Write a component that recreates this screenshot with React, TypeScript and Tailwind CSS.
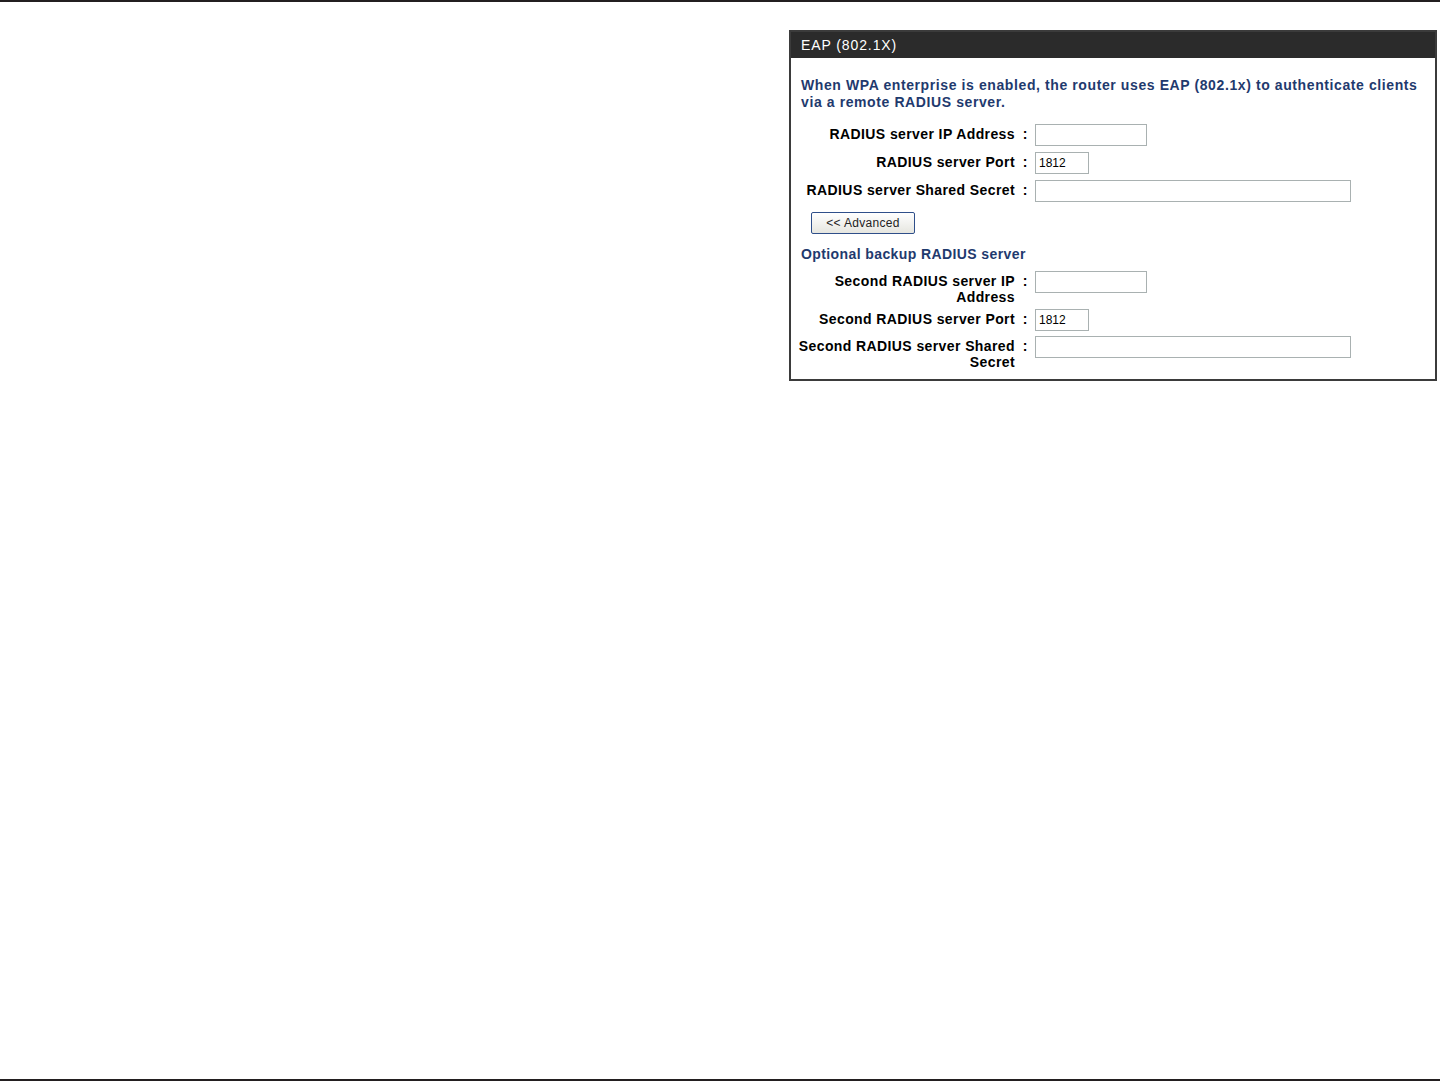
import React from 'react'

const font = { fontFamily: '"Liberation Sans", Arial, sans-serif' }

interface FieldRowProps {
  label: React.ReactNode
  inputWidth: string
  value?: string
  rowClass: string
}

// One label / colon / input line of the form
function FieldRow({ label, inputWidth, value, rowClass }: FieldRowProps): React.ReactElement {
  return (
    <div className={`flex items-start ${rowClass}`}>
      <div className="w-[218px] text-right text-[14px] font-bold leading-[16px] tracking-[0.4px] text-black">
        {label}
      </div>
      <div className="w-[20px] text-center text-[14px] font-bold leading-[16px] text-black">:</div>
      <input
        type="text"
        defaultValue={value}
        className={`${inputWidth} -mt-[2px] h-[22px] border border-[#a9b1b1] bg-white px-[3px] text-[12px] leading-[20px] text-black outline-none`}
        style={font}
      />
    </div>
  )
}

export default function App(): React.ReactElement {
  return (
    <div className="flex h-[1081px] flex-col bg-white" style={font}>
      <div className="h-[2px] bg-[#231f20]" />

      <main className="flex-1 pl-[789px] pt-[28px]">
        <section className="w-[648px] border-2 border-[#3b3b3b] bg-white">
          {/* Title bar */}
          <div className="flex h-[26px] items-center bg-[#2b2b2b] pl-[10px] text-[14px] tracking-[0.9px] text-white">
            EAP (802.1X)
          </div>

          <div className="px-[10px] pb-[7px] pt-[19px]">
            <p className="text-[14px] font-bold leading-[17px] tracking-[0.6px] text-[#1f3a6e]">
              When WPA enterprise is enabled, the router uses EAP (802.1x) to authenticate clients
              <br />
              via a remote RADIUS server.
            </p>

            <div className="-ml-[4px] mt-[15px] flex flex-col">
              <FieldRow rowClass="h-[28px]" label="RADIUS server IP Address" inputWidth="w-[112px]" />
              <FieldRow rowClass="h-[28px]" label="RADIUS server Port" inputWidth="w-[54px]" value="1812" />
              <FieldRow rowClass="h-[28px]" label="RADIUS server Shared Secret" inputWidth="w-[316px]" />
            </div>

            <button
              type="button"
              className="ml-[10px] mt-[1px] h-[22px] w-[104px] rounded-[2px] border border-[#2f4f8a] bg-gradient-to-b from-white to-[#e6e6e0] text-[12px] leading-[18px] tracking-[0.3px] text-[#222]"
              style={font}
            >
              &lt;&lt; Advanced
            </button>

            <div className="mt-[12px] text-[14px] font-bold leading-[17px] tracking-[0.4px] text-[#1f3a6e]">
              Optional backup RADIUS server
            </div>

            <div className="-ml-[4px] mt-[10px] flex flex-col">
              <FieldRow
                rowClass="h-[38px]"
                label={
                  <>
                    Second RADIUS server IP
                    <br />
                    Address
                  </>
                }
                inputWidth="w-[112px]"
              />
              <FieldRow rowClass="h-[27px]" label="Second RADIUS server Port" inputWidth="w-[54px]" value="1812" />
              <FieldRow
                rowClass="h-[34px]"
                label={
                  <>
                    Second RADIUS server Shared
                    <br />
                    Secret
                  </>
                }
                inputWidth="w-[316px]"
              />
            </div>
          </div>
        </section>
      </main>

      <div className="h-[2px] bg-[#231f20]" />
    </div>
  )
}
